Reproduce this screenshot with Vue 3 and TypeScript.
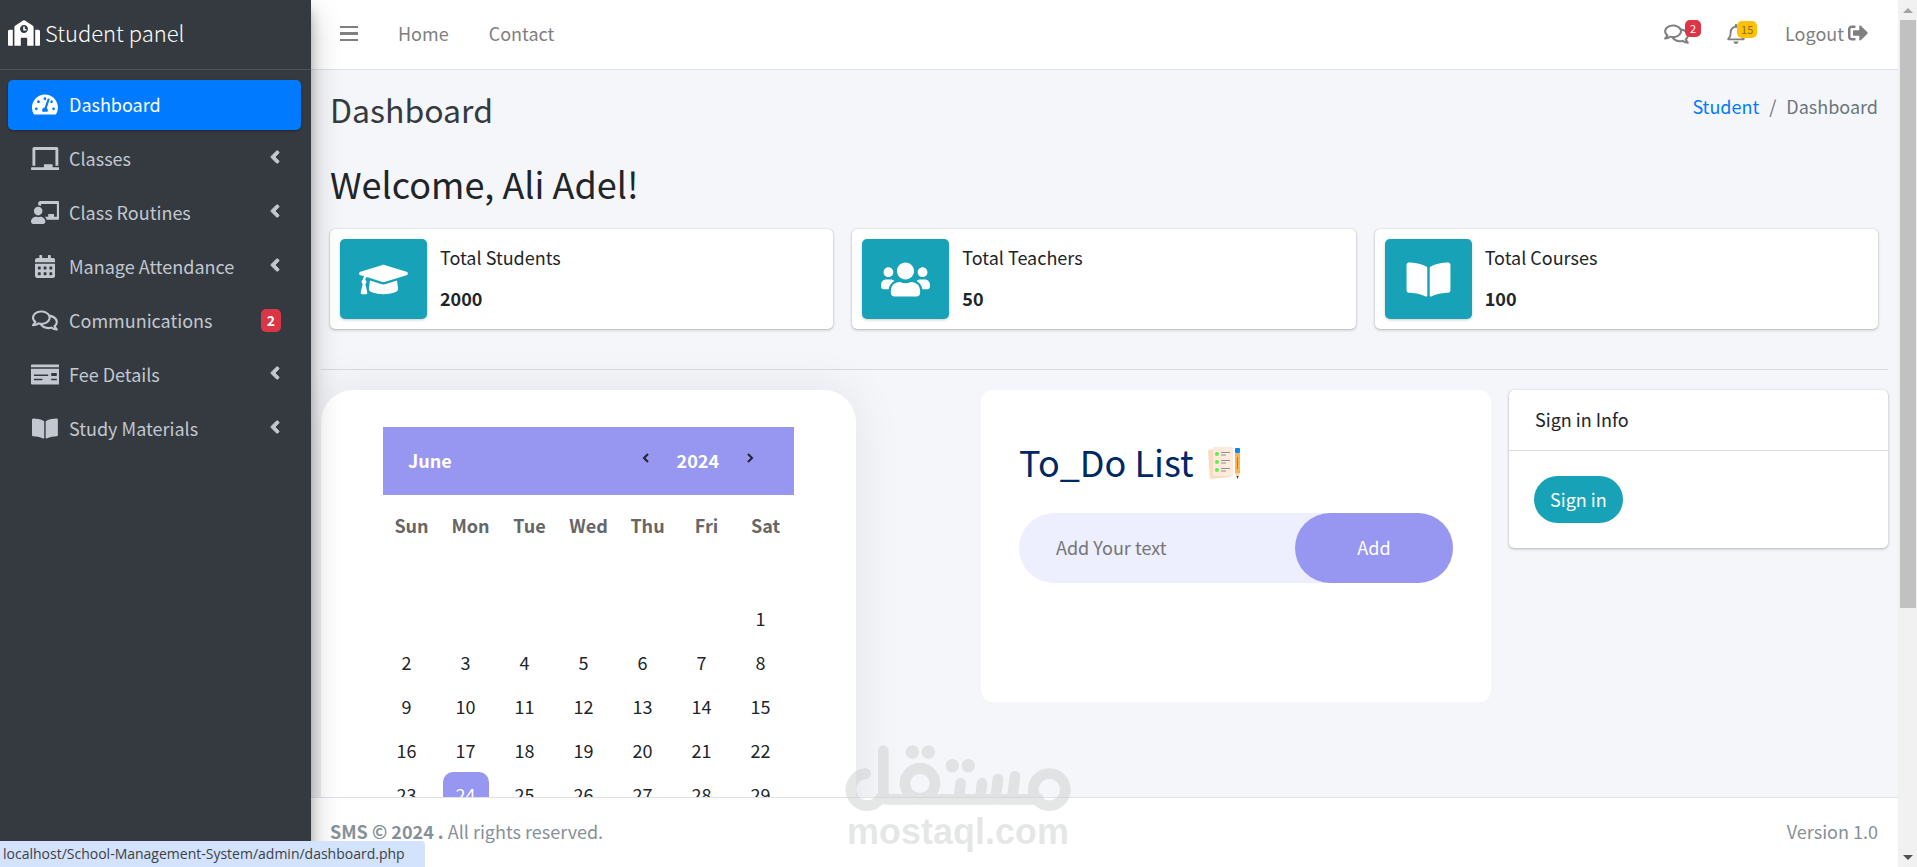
<script setup lang="ts">
import { ref } from 'vue'

interface Icon {
  box: string
  path: string
}

interface MenuItem {
  label: string
  icon: string
  active?: boolean
  badge?: number
}

const icons: Record<string, Icon> = {
  gauge: {
    box: '0 0 576 512',
    path: 'M288 32C128.94 32 0 160.94 0 320c0 52.8 14.25 102.26 39.06 144.8 5.61 9.62 16.3 15.2 27.44 15.2h443c11.14 0 21.83-5.58 27.44-15.2C561.75 422.26 576 372.8 576 320c0-159.06-128.94-288-288-288zm0 64c14.71 0 26.58 10.13 30.32 23.65-1.11 2.26-2.64 4.23-3.45 6.67l-9.22 27.67c-5.13 3.49-10.97 6.01-17.64 6.01-17.67 0-32-14.33-32-32S270.33 96 288 96zM96 384c-17.67 0-32-14.33-32-32s14.33-32 32-32 32 14.33 32 32-14.33 32-32 32zm48-160c-17.67 0-32-14.33-32-32s14.33-32 32-32 32 14.33 32 32-14.33 32-32 32zm246.77-72.41l-61.33 184C343.13 347.33 352 364.54 352 384c0 11.72-3.38 22.55-8.88 32H232.88c-5.5-9.45-8.88-20.28-8.88-32 0-33.94 26.5-61.43 59.9-63.59l61.34-184.01c4.17-12.56 17.73-19.45 30.36-15.17 12.57 4.19 19.35 17.79 15.17 30.36zm14.66 57.2l15.52-46.55c3.47-1.29 7.13-2.23 11.05-2.23 17.67 0 32 14.33 32 32s-14.33 32-32 32c-11.38-.01-20.89-6.28-26.57-15.22zM480 384c-17.67 0-32-14.33-32-32s14.33-32 32-32 32 14.33 32 32-14.33 32-32 32z',
  },
  board: {
    box: '0 0 640 512',
    path: 'M96 64h448v352h64V40c0-22.06-17.94-40-40-40H72C49.94 0 32 17.94 32 40v376h64V64zm528 384H480v-64H288v64H16c-8.84 0-16 7.16-16 16v32c0 8.84 7.16 16 16 16h608c8.84 0 16-7.16 16-16v-32c0-8.84-7.16-16-16-16z',
  },
  teacher: {
    box: '0 0 640 512',
    path: 'M208 352c-2.39 0-4.78.35-7.06 1.09C187.98 357.3 174.35 360 160 360c-14.35 0-27.98-2.7-40.95-6.91-2.28-.74-4.66-1.09-7.05-1.09C49.94 352-.33 402.48 0 464.62.14 490.88 21.73 512 48 512h224c26.27 0 47.86-21.12 48-47.38.33-62.14-49.94-112.62-112-112.62zm-48-32c53.02 0 96-42.98 96-96s-42.98-96-96-96-96 42.98-96 96 42.98 96 96 96zM592 0H208c-26.47 0-48 22.25-48 49.59V96c23.42 0 45.1 6.78 64 17.8V64h352v288h-64v-64H384v64h-76.24c19.1 16.69 33.12 38.73 39.69 64H592c26.47 0 48-22.25 48-49.59V49.59C640 22.25 618.47 0 592 0z',
  },
  calendar: {
    box: '0 0 448 512',
    path: 'M0 464c0 26.5 21.5 48 48 48h352c26.5 0 48-21.5 48-48V192H0v272zM320 268c0-6.600 5.400-12 12-12h40c6.600 0 12 5.400 12 12v40c0 6.600-5.400 12-12 12h-40c-6.600 0-12-5.400-12-12zM320 396c0-6.600 5.400-12 12-12h40c6.600 0 12 5.400 12 12v40c0 6.600-5.400 12-12 12h-40c-6.600 0-12-5.400-12-12zM192 268c0-6.600 5.400-12 12-12h40c6.600 0 12 5.400 12 12v40c0 6.600-5.400 12-12 12h-40c-6.600 0-12-5.400-12-12zM192 396c0-6.600 5.400-12 12-12h40c6.600 0 12 5.400 12 12v40c0 6.600-5.400 12-12 12h-40c-6.600 0-12-5.400-12-12zM64 268c0-6.600 5.400-12 12-12h40c6.600 0 12 5.400 12 12v40c0 6.600-5.400 12-12 12H76c-6.600 0-12-5.400-12-12zM64 396c0-6.600 5.400-12 12-12h40c6.600 0 12 5.400 12 12v40c0 6.600-5.400 12-12 12H76c-6.600 0-12-5.400-12-12zM400 64h-48V16c0-8.800-7.200-16-16-16h-32c-8.800 0-16 7.200-16 16v48H160V16c0-8.800-7.200-16-16-16h-32c-8.800 0-16 7.200-16 16v48H48C21.500 64 0 85.500 0 112v48h448v-48c0-26.500-21.500-48-48-48z',
  },
  comments: {
    box: '0 0 576 512',
    path: 'M532 386.2c27.5-27.1 44-61.1 44-98.2 0-80-76.5-146.1-176.2-157.9C368.3 72.5 294.3 32 208 32 93.1 32 0 103.6 0 192c0 37 16.5 71 44 98.2-15.3 30.7-37.3 54.5-37.7 54.9-6.3 6.7-8.1 16.5-4.4 25 3.6 8.5 12 14 21.2 14 53.5 0 96.7-20.2 125.2-38.8 9.2 2.1 18.7 3.7 28.4 4.9C208.1 407.6 281.8 448 368 448c20.8 0 40.8-2.4 59.8-6.8C456.3 459.7 499.4 480 553 480c9.2 0 17.5-5.5 21.2-14 3.6-8.5 1.9-18.3-4.4-25-.4-.3-22.5-24.1-37.8-54.8zm-392.8-92.3L122.1 305c-14.1 9.1-28.5 16.3-43.1 21.4 2.7-4.7 5.4-9.7 8-14.8l15.5-31.1L77.7 256C64.2 242.6 48 220.7 48 192c0-60.7 73.3-112 160-112s160 51.3 160 112-73.3 112-160 112c-16.5 0-33-1.9-49-5.6l-19.8-4.500zM498.3 352l-24.7 24.4 15.5 31.1c2.6 5.1 5.3 10.1 8 14.8-14.6-5.1-29-12.3-43.1-21.4l-17.1-11.1-19.9 4.6c-16 3.7-32.500 5.600-49 5.600-54 0-102.200-20.100-131.300-49.700C338 339.500 416 272.900 416 192c0-3.400-.4-6.700-.7-10C479.700 196.500 528 238.800 528 288c0 28.700-16.200 50.600-29.700 64z',
  },
  check: {
    box: '0 0 640 512',
    path: 'M0 448c0 17.67 14.33 32 32 32h576c17.67 0 32-14.33 32-32V128H0v320zm448-208c0-8.84 7.16-16 16-16h96c8.84 0 16 7.16 16 16v32c0 8.84-7.16 16-16 16h-96c-8.84 0-16-7.16-16-16v-32zm0 120c0-4.42 3.58-8 8-8h112c4.42 0 8 3.58 8 8v16c0 4.42-3.58 8-8 8H456c-4.42 0-8-3.58-8-8v-16zM64 264c0-4.42 3.58-8 8-8h304c4.42 0 8 3.58 8 8v16c0 4.42-3.58 8-8 8H72c-4.42 0-8-3.58-8-8v-16zm0 96c0-4.42 3.58-8 8-8h176c4.42 0 8 3.58 8 8v16c0 4.42-3.58 8-8 8H72c-4.42 0-8-3.58-8-8v-16zM624 32H16C7.160 32 0 39.160 0 48v48h640V48c0-8.840-7.160-16-16-16z',
  },
  book: {
    box: '0 0 576 512',
    path: 'M542.22 32.05c-54.8 3.11-163.72 14.43-230.96 55.59-4.64 2.84-7.27 7.89-7.27 13.17v363.87c0 11.55 12.63 18.85 23.28 13.49 69.18-34.82 169.23-44.32 218.7-46.92 16.89-.89 30.02-14.43 30.02-30.66V62.75c.01-17.71-15.35-31.74-33.77-30.7zM264.73 87.64C197.5 46.48 88.58 35.17 33.78 32.05 15.36 31.01 0 45.04 0 62.75V400.6c0 16.24 13.13 29.78 30.02 30.66 49.49 2.6 149.59 12.11 218.77 46.95 10.62 5.35 23.21-1.94 23.21-13.46V100.63c0-5.29-2.62-10.14-7.27-12.99z',
  },
  cap: {
    box: '0 0 640 512',
    path: 'M622.34 153.2L343.4 67.5c-15.2-4.67-31.6-4.67-46.79 0L17.66 153.2c-23.54 7.23-23.54 38.36 0 45.59l48.63 14.94c-10.67 13.19-17.23 29.28-17.88 46.9C38.78 266.15 32 276.11 32 288c0 10.78 5.68 19.85 13.86 25.65L20.33 428.53C18.11 438.52 25.71 448 35.94 448h56.11c10.24 0 17.84-9.48 15.62-19.47L82.14 313.65C90.32 307.85 96 298.78 96 288c0-11.57-6.47-21.25-15.66-26.87.76-15.02 8.44-28.3 20.69-36.72L296.6 284.5c9.06 2.78 26.44 6.25 46.79 0l278.95-85.7c23.55-7.24 23.55-38.36 0-45.6zM352.79 315.09c-28.53 8.76-52.84 3.92-65.59 0l-145.02-44.55L128 384c0 35.35 85.96 64 192 64s192-28.65 192-64l-14.18-113.47-145.03 44.56z',
  },
  users: {
    box: '0 0 640 512',
    path: 'M96 224c35.3 0 64-28.7 64-64s-28.7-64-64-64-64 28.7-64 64 28.7 64 64 64zm448 0c35.3 0 64-28.7 64-64s-28.7-64-64-64-64 28.7-64 64 28.7 64 64 64zm32 32h-64c-17.6 0-33.5 7.1-45.1 18.6 40.3 22.1 68.9 62 75.1 109.4h66c17.7 0 32-14.3 32-32v-32c0-35.3-28.7-64-64-64zm-256 0c61.9 0 112-50.1 112-112S381.9 32 320 32 208 82.1 208 144s50.1 112 112 112zm76.8 32h-8.3c-20.8 10-43.9 16-68.5 16s-47.6-6-68.5-16h-8.3C179.6 288 128 339.6 128 403.2V432c0 26.5 21.5 48 48 48h288c26.5 0 48-21.5 48-48v-28.8c0-63.6-51.6-115.2-115.2-115.2zm-223.7-13.4C161.5 263.1 145.6 256 128 256H64c-35.3 0-64 28.7-64 64v32c0 17.7 14.3 32 32 32h65.9c6.3-47.4 34.9-87.3 75.2-109.4z',
  },
  bell: {
    box: '0 0 448 512',
    path: 'M439.39 362.29c-19.32-20.76-55.47-51.99-55.47-154.29 0-77.7-54.48-139.9-127.94-155.16V32c0-17.67-14.32-32-31.98-32s-31.98 14.33-31.98 32v20.84C118.56 68.1 64.08 130.3 64.08 208c0 102.3-36.15 133.53-55.47 154.29-6 6.45-8.66 14.16-8.61 21.71.11 16.4 12.98 32 32.1 32h383.8c19.12 0 32-15.6 32.1-32 .05-7.55-2.61-15.27-8.61-21.71zM67.53 368c21.22-27.97 44.42-74.33 44.53-159.42 0-.2-.06-.38-.06-.58 0-61.86 50.14-112 112-112s112 50.14 112 112c0 .2-.06.38-.06.58.11 85.1 23.31 131.46 44.53 159.42H67.53zM224 512c35.32 0 63.97-28.65 63.97-64H160.03c0 35.35 28.65 64 63.97 64z',
  },
}

const menu: MenuItem[] = [
  { label: 'Dashboard', icon: 'gauge', active: true },
  { label: 'Classes', icon: 'board' },
  { label: 'Class Routines', icon: 'teacher' },
  { label: 'Manage Attendance', icon: 'calendar' },
  { label: 'Communications', icon: 'comments', badge: 2 },
  { label: 'Fee Details', icon: 'check' },
  { label: 'Study Materials', icon: 'book' },
]

const stats = [
  { label: 'Total Students', value: 2000, icon: 'cap' },
  { label: 'Total Teachers', value: 50, icon: 'users' },
  { label: 'Total Courses', value: 100, icon: 'book' },
]

const weekdays = ['Sun', 'Mon', 'Tue', 'Wed', 'Thu', 'Fri', 'Sat']
const today = 24
// June 2024 starts on a Saturday, so the first week has six empty cells.
const weeks: (number | null)[][] = Array.from({ length: 6 }, (_, w) =>
  Array.from({ length: 7 }, (_, d) => {
    const day = w * 7 + d - 5
    return day >= 1 && day <= 30 ? day : null
  }),
)

const task = ref('')
</script>

<template>
  <div class="app">
    <aside class="sidebar">
      <a class="brand" href="#">
        <svg class="brand-icon" viewBox="0 0 640 512" aria-hidden="true">
          <path fill="currentColor" d="M0 224v272c0 8.84 7.16 16 16 16h80V192H32c-17.67 0-32 14.33-32 32zm360-48h-24v-40c0-4.42-3.58-8-8-8h-16c-4.42 0-8 3.58-8 8v64c0 4.42 3.58 8 8 8h48c4.42 0 8-3.58 8-8v-16c0-4.42-3.58-8-8-8zm137.750-63.960l-160-106.670a32.020 32.020 0 0 0-35.500 0l-160 106.670A32.002 32.002 0 0 0 128 138.660V512h128V368c0-8.840 7.160-16 16-16h96c8.840 0 16 7.160 16 16v144h128V138.670c0-10.700-5.350-20.690-14.250-26.630zM320 256c-44.180 0-80-35.820-80-80s35.820-80 80-80 80 35.820 80 80-35.820 80-80 80zm288-64h-64v320h80c8.840 0 16-7.160 16-16V224c0-17.670-14.330-32-32-32z" />
        </svg>
        <span>Student panel</span>
      </a>
      <nav class="menu">
        <a v-for="m in menu" :key="m.label" class="item" :class="{ active: m.active }" href="#">
          <span class="item-icon">
            <svg :viewBox="icons[m.icon].box" aria-hidden="true">
              <path fill="currentColor" fill-rule="evenodd" :d="icons[m.icon].path" />
            </svg>
          </span>
          <span class="item-label">{{ m.label }}</span>
          <span v-if="m.badge" class="item-badge">{{ m.badge }}</span>
          <svg v-else-if="!m.active" class="angle" viewBox="0 0 256 512" aria-hidden="true">
            <path fill="currentColor" stroke="currentColor" stroke-width="24" d="M31.7 239l136-136c9.4-9.4 24.6-9.4 33.9 0l22.6 22.600c9.400 9.400 9.400 24.600 0 33.900L127.900 256l96.400 96.400c9.400 9.400 9.400 24.600 0 33.900L201.700 409c-9.400 9.400-24.600 9.400-33.900 0l-136-136c-9.500-9.400-9.500-24.600-.1-34z" />
          </svg>
        </a>
      </nav>
    </aside>

    <div class="main">
      <header class="navbar">
        <button class="bars" type="button" aria-label="Toggle menu">
          <svg viewBox="0 0 18 16" aria-hidden="true">
            <path fill="currentColor" d="M0 0h18v2H0zM0 6h18v3H0zM0 13h18v2H0z" />
          </svg>
        </button>
        <a class="nav-link" href="#">Home</a>
        <a class="nav-link" href="#">Contact</a>
        <div class="nav-right">
          <a class="notify" href="#" aria-label="Messages">
            <svg class="ic-comments" :viewBox="icons.comments.box" aria-hidden="true">
              <path fill="currentColor" :d="icons.comments.path" />
            </svg>
            <span class="dot red">2</span>
          </a>
          <a class="notify" href="#" aria-label="Notifications">
            <svg class="ic-bell" :viewBox="icons.bell.box" aria-hidden="true">
              <path fill="currentColor" :d="icons.bell.path" />
            </svg>
            <span class="dot yellow">15</span>
          </a>
          <a class="logout" href="#">
            Logout
            <svg viewBox="0 0 512 512" aria-hidden="true">
              <path fill="currentColor" d="M497 273L329 441c-15 15-41 4.5-41-17v-96H152c-13.3 0-24-10.7-24-24v-96c0-13.3 10.7-24 24-24h136V88c0-21.4 25.900-32 41-17l168 168c9.300 9.400 9.300 24.600 0 34zM192 436v-40c0-6.600-5.400-12-12-12H96c-17.700 0-32-14.300-32-32V160c0-17.700 14.300-32 32-32h84c6.600 0 12-5.400 12-12V76c0-6.600-5.400-12-12-12H96c-53 0-96 43-96 96v192c0 53 43 96 96 96h84c6.600 0 12-5.400 12-12z" />
            </svg>
          </a>
        </div>
      </header>

      <main class="content">
        <div class="head">
          <h1 class="page-title">Dashboard</h1>
          <nav class="crumbs" aria-label="Breadcrumb">
            <a href="#">Student</a>
            <span>/</span>
            <span>Dashboard</span>
          </nav>
        </div>
        <h2 class="welcome">Welcome, Ali Adel!</h2>

        <section class="stats">
          <article v-for="s in stats" :key="s.label" class="stat">
            <div class="stat-icon">
              <svg :viewBox="icons[s.icon].box" aria-hidden="true">
                <path fill="currentColor" :d="icons[s.icon].path" />
              </svg>
            </div>
            <div class="stat-text">
              <span>{{ s.label }}</span>
              <strong>{{ s.value }}</strong>
            </div>
          </article>
        </section>

        <hr class="rule" />

        <section class="panels">
          <div class="calendar">
            <div class="cal-head">
              <span class="month">June</span>
              <button type="button" aria-label="Previous">
                <svg viewBox="0 0 8 10" aria-hidden="true"><path d="M6 1 2 5l4 4" fill="none" stroke="currentColor" stroke-width="2" /></svg>
              </button>
              <span class="year">2024</span>
              <button type="button" aria-label="Next">
                <svg viewBox="0 0 8 10" aria-hidden="true"><path d="m2 1 4 4-4 4" fill="none" stroke="currentColor" stroke-width="2" /></svg>
              </button>
            </div>
            <table class="days">
              <thead>
                <tr>
                  <th v-for="d in weekdays" :key="d" scope="col">{{ d }}</th>
                </tr>
              </thead>
              <tbody>
                <tr v-for="(week, w) in weeks" :key="w">
                  <td v-for="(day, d) in week" :key="d">
                    <span v-if="day" class="day" :class="{ today: day === today }">{{ day }}</span>
                  </td>
                </tr>
              </tbody>
            </table>
          </div>

          <div class="todo">
            <h2 class="todo-title">
              To_Do List
              <svg viewBox="0 0 33 32" aria-hidden="true">
                <path d="M0 3 6 2 24 28 22 30 2 32Z" fill="#f9dcc0" />
                <rect x="5" y="0" width="20" height="29" rx="1" fill="#fdeadb" />
                <g fill="#5cf24d">
                  <circle cx="9" cy="7" r="2" />
                  <circle cx="9" cy="15" r="2" />
                  <circle cx="9" cy="23" r="2" />
                </g>
                <path d="M13 5.500h9M13 8h5M13 13.500h9M13 16h5M13 21.500h9M13 24h5" stroke="#8f9299" fill="none" />
                <rect x="27" y="1" width="5" height="5" rx="1" fill="#0a84ff" />
                <rect x="27" y="6" width="5" height="20" fill="#fbb54f" />
                <path d="M29.500 10v12" stroke="#b87a37" fill="none" />
                <path d="M27 26h5l-2.500 6z" fill="#f3d3b0" />
                <path d="M28.500 29h2l-1 3z" fill="#333" />
              </svg>
            </h2>
            <form class="todo-row" @submit.prevent>
              <input v-model="task" type="text" placeholder="Add Your text" aria-label="Add Your text" />
              <button type="submit">Add</button>
            </form>
          </div>

          <div class="sign">
            <div class="sign-head">Sign in Info</div>
            <div class="sign-body">
              <button type="button">Sign in</button>
            </div>
          </div>
        </section>
      </main>

      <footer class="footer">
        <div><strong>SMS © 2024 .</strong> All rights reserved.</div>
        <div>Version 1.0</div>
      </footer>
    </div>

    <div class="scrollbar" aria-hidden="true">
      <span class="arrow up"></span>
      <span class="thumb"></span>
      <span class="arrow down"></span>
    </div>

    <div class="watermark" aria-hidden="true">
      <svg viewBox="0 0 678 200">
        <g fill="none" stroke="currentColor" stroke-width="32" stroke-linecap="round">
          <circle cx="613" cy="134" r="48" />
          <path d="M62 86A48 48 0 1 0 106 160Q110 163 130 163H560Q575 163 580 160" stroke-linejoin="round" />
          <path d="M115 17V152" />
          <circle cx="225" cy="115" r="45" />
          <path d="M347 115 343 150M411 115 407 150M459 102 453 150M510 94 503 150" />
        </g>
        <g fill="currentColor">
          <circle cx="202" cy="21" r="20" />
          <circle cx="250" cy="21" r="20" />
          <circle cx="322" cy="62" r="20" />
          <circle cx="370" cy="62" r="20" />
        </g>
      </svg>
      <span>mostaql.com</span>
    </div>

    <div class="status">localhost/School-Management-System/admin/dashboard.php</div>
  </div>
</template>

<style>
body {
  margin: 0;
  overflow: hidden;
}
</style>

<style scoped>
.app {
  display: grid;
  grid-template-columns: 311px minmax(0, 1fr) 19px;
  height: 100vh;
  font-family: "Noto Sans CJK JP", "Noto Sans CJK SC", sans-serif;
  font-size: 18px;
  line-height: 30px;
  color: #212529;
  background: #f4f6f9;
}
.app *,
.app *::before {
  box-sizing: border-box;
}
a {
  text-decoration: none;
  color: inherit;
}
button,
input {
  font: inherit;
  border: 0;
  padding: 0;
  color: inherit;
  background: none;
}
svg {
  display: block;
}

.sidebar {
  position: relative;
  z-index: 2;
  background: #343a40;
  color: #c2c7d0;
  box-shadow: 0 14px 28px rgba(0, 0, 0, 0.25), 0 10px 10px rgba(0, 0, 0, 0.22);
}
.brand {
  display: flex;
  align-items: center;
  gap: 5px;
  height: 70px;
  padding: 0 8px 4px;
  border-bottom: 1px solid #4b545c;
  color: #fff;
  font-size: 22px;
  font-weight: 300;
}
.brand span {
  padding-bottom: 2px;
}
.brand-icon {
  width: 32px;
  height: 26px;
}
.menu {
  display: flex;
  flex-direction: column;
  gap: 4px;
  padding: 10px 10px 10px 8px;
}
.item {
  display: flex;
  align-items: center;
  height: 50px;
  padding: 0 20px 2px 21px;
  border-radius: 5px;
}
.item.active {
  background: #007bff;
  color: #fff;
  box-shadow: 0 1px 3px rgba(0, 0, 0, 0.12), 0 1px 2px rgba(0, 0, 0, 0.24);
}
.item-icon {
  display: flex;
  justify-content: center;
  width: 32px;
  margin-right: 8px;
}
.item-icon svg {
  height: 23px;
}
.item-label {
  flex: 1;
}
.item-badge {
  width: 20px;
  height: 23px;
  border-radius: 5px;
  background: #dc3545;
  color: #fff;
  font-size: 14px;
  font-weight: 700;
  line-height: 23px;
  text-align: center;
}
.angle {
  width: 12px;
  height: 22px;
  padding-bottom: 2px;
}

.main {
  display: flex;
  flex-direction: column;
  min-width: 0;
  height: 100vh;
}
.navbar {
  display: flex;
  align-items: center;
  flex: none;
  height: 70px;
  padding: 0 30px 2px 29px;
  border-bottom: 1px solid #dee2e6;
  background: #fff;
  color: #808080;
}
.bars {
  margin-right: 40px;
}
.bars svg {
  width: 18px;
  height: 16px;
}
.nav-link {
  margin-right: 40px;
  padding-bottom: 2px;
}
.nav-right {
  display: flex;
  align-items: center;
  margin-left: auto;
}
.notify {
  position: relative;
  margin-right: 38px;
}
.ic-comments {
  width: 25px;
  height: 22px;
}
.ic-bell {
  width: 18px;
  height: 20px;
}
.dot {
  position: absolute;
  top: -3px;
  left: 21px;
  padding: 0 5px;
  border-radius: 5px;
  font-size: 11px;
  line-height: 17px;
}
.red {
  background: #dc3545;
  color: #fff;
}
.yellow {
  left: 10px;
  padding: 0 4px;
  background: #ffc107;
  color: #8a6d1c;
}
.logout {
  display: flex;
  align-items: center;
  gap: 4px;
  margin-left: 2px;
  padding-bottom: 2px;
}
.logout svg {
  width: 20px;
  height: 20px;
}

.content {
  flex: 1;
  min-height: 0;
  overflow: hidden;
  padding: 17px 10px 0;
}
.head {
  display: flex;
  justify-content: space-between;
  padding: 0 10px 0 9px;
}
h1,
h2 {
  margin: 0;
  font-weight: 400;
}
.page-title {
  font-size: 32px;
  line-height: 44px;
  color: #343a40;
}
.crumbs {
  display: flex;
  gap: 10px;
  padding-top: 4px;
  color: #6c757d;
}
.crumbs a {
  color: #007bff;
}
.welcome {
  margin: 28px 9px 22px;
  font-size: 36px;
  line-height: 48px;
}
.stats {
  display: grid;
  grid-template-columns: repeat(3, minmax(0, 1fr));
  gap: 19px;
  padding: 0 10px 0 9px;
}
.stat {
  display: flex;
  gap: 13px;
  padding: 10px;
  border-radius: 5px;
  background: #fff;
  box-shadow: 0 0 1px rgba(0, 0, 0, 0.2), 0 1px 3px rgba(0, 0, 0, 0.25);
}
.stat-icon {
  display: flex;
  align-items: center;
  justify-content: center;
  width: 87px;
  height: 80px;
  border-radius: 5px;
  background: #17a2b8;
  color: #fff;
  box-shadow: 0 1px 3px rgba(0, 0, 0, 0.2);
}
.stat-icon svg {
  width: 49px;
  height: 39px;
}
.stat-text {
  display: flex;
  flex-direction: column;
  justify-content: space-between;
  padding: 3px 0 6px;
}
.rule {
  height: 1px;
  margin: 40px 0 20px;
  border: 0;
  background: #dadcdf;
}
.panels {
  display: grid;
  grid-template-columns: minmax(0, 642fr) minmax(0, 510fr) minmax(0, 379fr);
  align-items: start;
  gap: 18px;
}
.calendar {
  max-width: 535px;
  padding: 37px 62px;
  border-radius: 32px;
  background: #fff;
  box-shadow: 0 0 50px rgba(0, 0, 0, 0.08);
}
.cal-head {
  display: flex;
  align-items: center;
  gap: 27px;
  height: 68px;
  padding: 0 40px 2px 25px;
  background: #9796f0;
  color: #fff;
  font-weight: 700;
}
.month {
  flex: 1;
}
.cal-head button {
  padding-bottom: 4px;
  color: #212529;
}
.cal-head svg {
  width: 8px;
  height: 10px;
}
.days {
  width: 413px;
  margin-left: -6px;
  border-collapse: collapse;
  table-layout: fixed;
  text-align: center;
}
.days th {
  height: 101px;
  padding: 15px 0 0 10px;
  vertical-align: top;
  color: #666;
}
.days td {
  height: 44px;
  padding: 0;
}
.day {
  display: block;
  width: 46px;
  margin: 0 auto;
  border-radius: 10px;
  line-height: 44px;
}
.today {
  background: #9796f0;
  color: #fff;
}
.todo {
  min-height: 312px;
  padding: 47px 38px;
  border-radius: 12px;
  background: #fff;
}
.todo-title {
  display: flex;
  align-items: center;
  gap: 14px;
  font-size: 36px;
  line-height: 48px;
  color: #002765;
}
.todo-title svg {
  width: 33px;
  height: 36px;
  padding-top: 4px;
}
.todo-row {
  display: flex;
  height: 70px;
  margin-top: 28px;
  border-radius: 35px;
  background: #edeefe;
}
.todo-row input {
  flex: 1;
  min-width: 0;
  padding: 0 37px 2px;
  outline: 0;
}
.todo-row input::placeholder {
  color: #757575;
  opacity: 1;
}
.todo-row button {
  width: 158px;
  padding-bottom: 2px;
  border-radius: 35px;
  background: #9796f0;
  color: #fff;
}
.sign {
  border-radius: 5px;
  background: #fff;
  box-shadow: 0 0 1px rgba(0, 0, 0, 0.2), 0 1px 3px rgba(0, 0, 0, 0.25);
}
.sign-head {
  padding: 14px 26px 16px;
  border-bottom: 1px solid #dadcdf;
}
.sign-body {
  padding: 25px;
}
.sign-body button {
  display: block;
  height: 47px;
  padding: 0 16px 2px;
  border-radius: 24px;
  background: #17a2b8;
  color: #fff;
}
.footer {
  display: flex;
  justify-content: space-between;
  flex: none;
  height: 70px;
  padding: 18px 20px 0 19px;
  border-top: 1px solid #dee2e6;
  background: #fff;
  color: #869099;
}

.scrollbar {
  display: flex;
  flex-direction: column;
  align-items: center;
  padding: 8px 1px 7px 2px;
  background: #f1f1f1;
}
.arrow {
  border: 5px solid transparent;
}
.up {
  border-top: 0;
  border-bottom-color: #a3a3a3;
}
.down {
  margin-top: auto;
  border-bottom: 0;
  border-top-color: #505050;
}
.thumb {
  width: 100%;
  height: 69%;
  margin-top: 7px;
  background: #c1c1c1;
}

.watermark {
  position: fixed;
  z-index: 3;
  left: 845px;
  bottom: 15px;
  width: 226px;
  color: #cfd1d2;
  opacity: 0.55;
  font-family: "Liberation Sans", Arial, sans-serif;
  font-size: 36px;
  font-weight: 700;
  line-height: 40px;
  text-align: center;
}
.status {
  position: fixed;
  z-index: 4;
  left: 0;
  bottom: 0;
  width: 425px;
  padding-left: 3px;
  border-radius: 0 4px 0 0;
  background: #d3e3fd;
  color: #3c4043;
  font-family: "Open Sans", "Noto Sans", sans-serif;
  font-size: 14px;
  line-height: 26px;
  white-space: nowrap;
}
</style>
